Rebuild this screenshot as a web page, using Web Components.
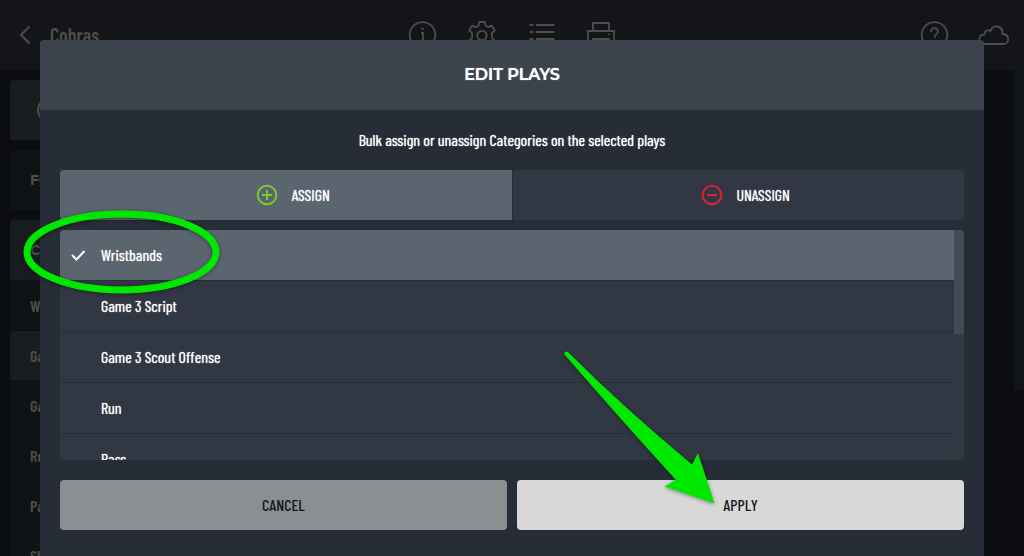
<!DOCTYPE html>
<html lang="en">
<head>
<meta charset="utf-8">
<title>Edit Plays</title>
<style>
html,body{margin:0;height:100%;background:#0b0d10}
body{overflow:hidden;font-family:"Barlow Condensed","Liberation Sans Narrow","Roboto Condensed",Roboto,sans-serif;font-size:16px;line-height:20px;color:#fff}
</style>
</head>
<body>
<play-app></play-app>
<script>
function define(name, html, init) {
  const template = document.createElement('template');
  template.innerHTML = html;
  customElements.define(name, class extends HTMLElement {
    constructor() {
      super();
      this.attachShadow({mode: 'open'}).append(template.content.cloneNode(true));
    }
    connectedCallback() { if (init) init.call(this, this.shadowRoot); }
  });
}

define('icon-button', `<style>
:host{display:block}
button{display:block;width:32px;height:32px;padding:0;border:0;background:none;color:inherit}
::slotted(svg){display:block;width:32px;height:32px;fill:none;stroke:currentColor;stroke-width:1.8;overflow:visible}
</style><button type="button"><slot></slot></button>`, function (root) {
  root.querySelector('button').setAttribute('aria-label', this.getAttribute('label'));
});

define('top-bar', `<style>
:host{display:grid;grid-template-columns:1fr auto 1fr;align-items:center;height:70px;background:#131518;color:#4d4d4f}
.team{display:flex;align-items:center;gap:8px;padding-left:10px}
.team span{font-size:20px;line-height:24px;font-weight:600}
.tools{display:flex;gap:28px}
.end{display:flex;justify-content:flex-end;gap:27px;padding-right:14px}
</style>
<div class="team"><icon-button label="Back"><svg viewBox="0 0 32 32"><path d="M19.500 7.500 11 16l8.500 8.500" stroke-width="2"/></svg></icon-button><span>Cobras</span></div>
<div class="tools">
<icon-button label="Info"><svg viewBox="0 0 32 32"><circle cx="16.500" cy="16" r="12.800"/><path d="M15 14H17V22M14.500 22h5"/><circle cx="16.500" cy="9.800" r="1.200" fill="currentColor" stroke="none"/></svg></icon-button>
<icon-button label="Settings"><svg viewBox="0 0 32 32"><circle cx="16" cy="16.500" r="4.700"/><path d="M13.200 3h5.600l.9 3.700 2.600 1.500 3.600-1.500 2.900 4.700-2.900 2.700v4.800l2.900 2.700-2.900 4.700-3.600-1.500-2.600 1.500-.9 3.700h-5.600l-.9-3.700-2.600-1.500-3.600 1.500-2.900-4.700 2.900-2.700v-4.800l-2.900-2.700 2.900-4.700 3.600 1.500 2.600-1.500z" stroke-linejoin="round"/></svg></icon-button>
<icon-button label="List"><svg viewBox="0 0 32 32"><path d="M3.500 6h4M10 6h18.500M3.500 13h4M10 13h18.500M3.500 20h4M10 20h18.500M3.500 27h4M10 27h18.500"/></svg></icon-button>
<icon-button label="Print"><svg viewBox="0 0 32 32"><path d="M7 12V4h16v8M7 24H2V12h26v12h-5M7 20h16v8H7z"/><circle cx="23" cy="15.500" r="1" fill="currentColor" stroke="none"/></svg></icon-button>
</div>
<div class="end">
<icon-button label="Help"><svg viewBox="0 0 32 32"><circle cx="15.500" cy="16" r="12.800"/><path d="M12 13c0-5 7-5 7-.5 0 3-3.500 2.500-3.500 6"/><circle cx="15.500" cy="22" r="1" fill="currentColor" stroke="none"/></svg></icon-button>
<icon-button label="Cloud"><svg viewBox="0 0 32 32"><path d="M7 25C-.5 25-.5 15.500 6.500 15.500c0-4 3.500-5.500 6-3.500 2.500-7.500 12.500-5.500 12 3 7.500.5 7.500 10 1 10z"/></svg></icon-button>
</div>`);

define('side-row', `<style>
:host{display:flex;align-items:center;box-sizing:border-box;height:50px;padding-left:20px;border-top:1px solid #0c0f12;background:#0f1316;font-weight:600;font-size:16px;white-space:nowrap}
:host([active]){background:#191c1e}
:host([heading]){height:60px;border:0;border-radius:4px 4px 0 0;font-family:Montserrat,Inter,sans-serif;font-size:14px;font-weight:bold}
</style><slot></slot>`);

define('side-panel', `<style>
:host{display:flex;flex-direction:column;gap:10px;width:240px;padding:10px;color:#4d4d4f}
.card{display:flex;align-items:center;height:60px;padding-left:24px;border-radius:4px;background:#1a1d1f}
svg{width:24px;height:24px;fill:none;stroke:currentColor;stroke-width:2}
</style>
<div class="card"><svg viewBox="0 0 24 24"><circle cx="15" cy="12" r="11"/></svg></div>
<side-row heading>FORMATIONS</side-row>
<div><side-row heading active>CATEGORIES</side-row>
<side-row>Wristbands</side-row><side-row active>Game 3 Script</side-row><side-row>Game 3 Scout Offense</side-row><side-row>Run</side-row><side-row>Pass</side-row><side-row>Short Yardage</side-row></div>`);

define('mode-button', `<style>
:host{display:block;color:#fff}
button{display:flex;width:100%;height:50px;align-items:center;justify-content:center;gap:14px;border:0;padding:0 0 0 14px;background:#323843;color:inherit;font:inherit;text-shadow:inherit;border-radius:0 4px 4px 0}
:host([selected]) button{background:#5b6570;border-radius:4px 0 0 4px}
::slotted(svg){width:22px;height:22px;fill:none;stroke-width:2}
</style><button type="button"><slot name="icon"></slot><slot></slot></button>`, function (root) {
  root.querySelector('button').setAttribute('aria-pressed', this.hasAttribute('selected'));
});

define('category-row', `<style>
:host{display:block;flex:none;border-bottom:1px solid #262d36;background:#323843}
label{display:flex;align-items:center;height:50px;padding-left:10px;gap:15px}
input{position:absolute;appearance:none;width:16px;height:16px;margin:0}
svg{width:16px;height:16px;fill:none;stroke:none;stroke-width:2}
:host([checked]){background:#5b6570}
:host([checked]) svg{stroke:#fff}
</style><label><input type="checkbox"><svg viewBox="0 0 16 16" aria-hidden="true"><path d="M2 8 6.500 12.500 14.500 4"/></svg><slot></slot></label>`, function (root) {
  const input = root.querySelector('input');
  input.checked = this.hasAttribute('checked');
  input.addEventListener('change', () => this.toggleAttribute('checked', input.checked));
});

define('category-list', `<style>
:host{display:grid;grid-template-columns:1fr 10px;height:230px;border-radius:4px;overflow:hidden;background:#323843}
.rows{position:relative;display:flex;flex-direction:column;overflow:auto;scrollbar-width:none}
.track{background:#303a43}
.thumb{height:45%;background:#414b55}
</style><div class="rows"><slot></slot></div><div class="track"><div class="thumb"></div></div>`);

define('action-button', `<style>
:host{display:block;position:relative}
button{display:block;width:100%;height:50px;padding:0;border:0;border-radius:4px;background:#8b8f92;color:#15181b;font:inherit;font-weight:500}
:host([primary]) button{background:#d8d8d8}
</style><button type="button"><slot></slot></button><slot name="mark"></slot>`);

define('edit-dialog', `<style>
:host{position:absolute;top:40px;right:40px;bottom:0;left:40px;display:flex;flex-direction:column;background:#262d36;border-radius:4px 4px 0 0}
h1{flex:none;margin:0;height:70px;line-height:70px;text-align:center;background:#3c434d;border-radius:4px 4px 0 0;font-family:Montserrat,Inter,sans-serif;font-size:16px;font-weight:600}
h1,p,.modes,category-list{text-shadow:0 0 1px #fff}
.body{display:flex;flex-direction:column;padding:20px}
p{margin:0 0 20px;text-align:center}
.modes{display:grid;grid-template-columns:1fr 1fr;gap:1px;margin-bottom:10px}
.actions{display:grid;grid-template-columns:1fr 1fr;gap:10px;margin-top:20px}
.ring{position:absolute;left:-20px;top:166px;width:204px;height:92px}
.arrow{position:absolute;left:50%;margin-left:-181px;top:-134px;width:160px;height:164px;pointer-events:none}
.ring,.arrow{filter:drop-shadow(0 1px 2px #0006);pointer-events:none}
</style>
<h1>EDIT PLAYS</h1>
<div class="body">
<p>Bulk assign or unassign Categories on the selected plays</p>
<div class="modes">
<mode-button selected><svg slot="icon" viewBox="0 0 22 22" stroke="#7cc82f"><circle cx="11" cy="11" r="9.300"/><path d="M11 6v10M6 11h10"/></svg>ASSIGN</mode-button>
<mode-button><svg slot="icon" viewBox="0 0 22 22" stroke="#d9232e"><circle cx="11" cy="11" r="9.300"/><path d="M6 11h10"/></svg>UNASSIGN</mode-button>
</div>
<category-list><category-row checked>Wristbands</category-row><category-row>Game 3 Script</category-row><category-row>Game 3 Scout Offense</category-row><category-row>Run</category-row><category-row>Pass</category-row></category-list>
<div class="actions">
<action-button>CANCEL</action-button>
<action-button primary>APPLY<svg class="arrow" slot="mark" viewBox="0 0 160 164" aria-hidden="true"><path fill="#00e800" d="M4.500 8.500Q3.500 5.500 7 5.500L9 7Q64 62 132 118.500L138 107 154.500 157.500 104.500 140.500 116 134Q62 75 4.500 8.500z"/></svg></action-button>
</div>
</div>
<svg class="ring" viewBox="0 0 204 92" aria-hidden="true"><ellipse cx="101.500" cy="46" rx="94.500" ry="38" fill="none" stroke="#00e800" stroke-width="7"/></svg>`);

define('play-app', `<style>
:host{display:block;position:relative;height:100%;overflow:hidden}
.main{display:flex;justify-content:space-between}
.edge{width:10px;height:320px;background:#111518}
</style><top-bar></top-bar><div class="main"><side-panel></side-panel><div class="edge"></div></div><edit-dialog role="dialog" aria-label="Edit plays"></edit-dialog>`);
</script>
</body>
</html>
